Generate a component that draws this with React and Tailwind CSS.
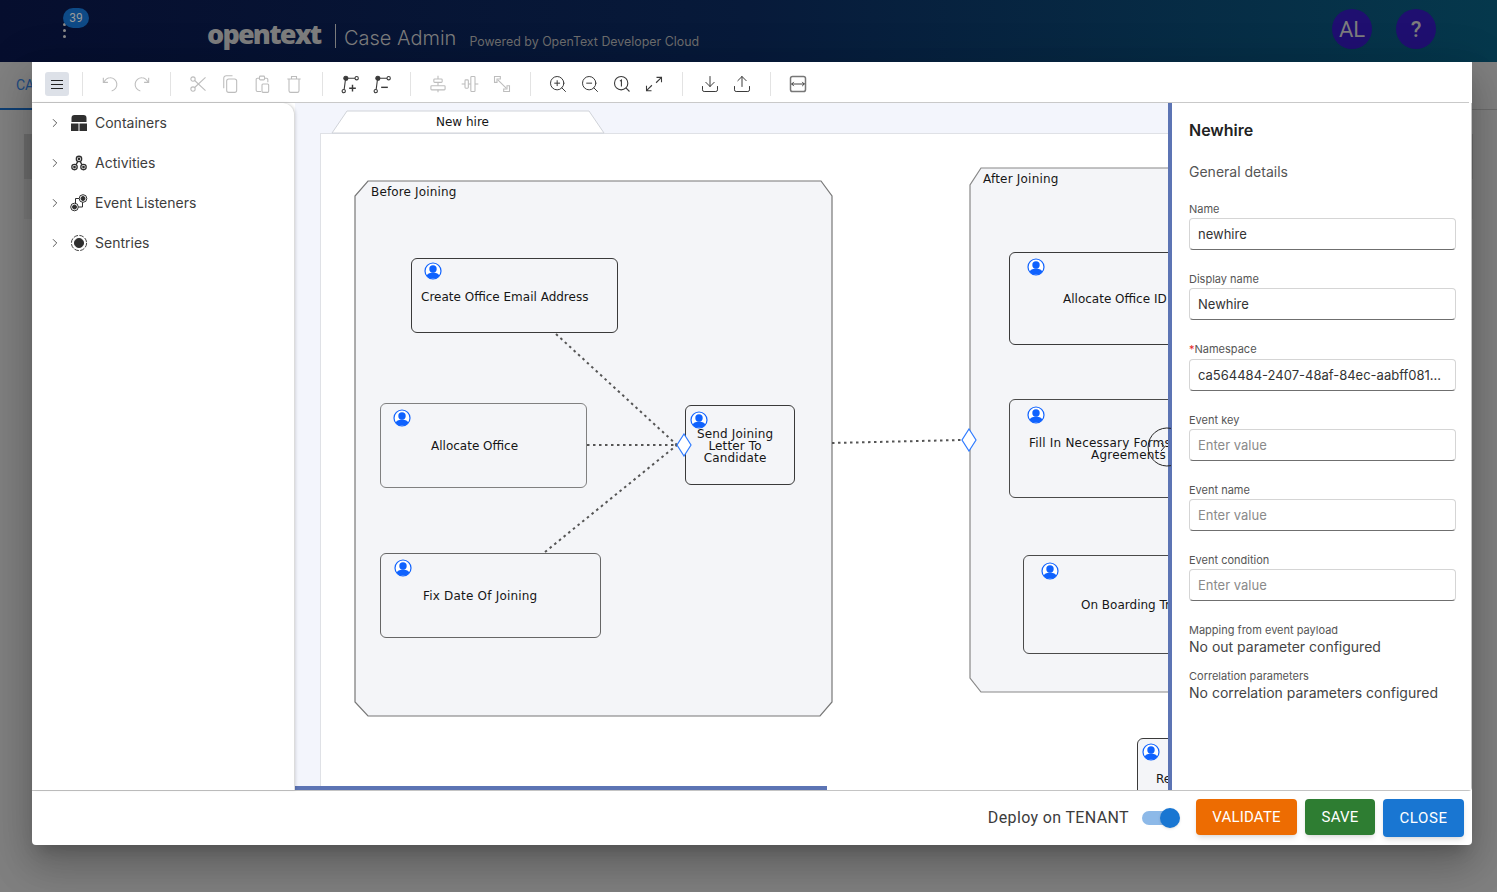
import { ChevronRight, Download, Upload, ZoomIn, ZoomOut } from 'lucide-react';

const inter = 'font-["Inter",sans-serif]';

function Sep({ className = 'ml-4 mr-[15px]' }) {
    return <div className={`w-px h-6 bg-[#e3e3e3] shrink-0 ${className}`} />;
}

function ToolIcon({ children, off }) {
    return (
        <svg viewBox="0 0 24 24" fill="none" stroke="currentColor" strokeWidth="1.3" className={`w-5 h-5 ${off ? 'text-[#bdbdbd]' : 'text-[#3a3a3a]'}`}>
            {children}
        </svg>
    );
}

function ToolButton({ children }) {
    return <div className="w-6 h-6 flex items-center justify-center shrink-0">{children}</div>;
}

const lucideOn = { size: 20, strokeWidth: 1.2, className: 'text-[#3a3a3a]' };

function Toolbar() {
    return (
        <div className="h-[41px] flex items-center pl-[13px] pt-1 border-b border-[#c9c9c9] mr-[3px] shrink-0">
            <div className="w-6 h-6 rounded-[3px] bg-[#dde1e8] flex flex-col items-center justify-center gap-[3px] shrink-0">
                <div className="w-3 h-px bg-[#222]" />
                <div className="w-3 h-px bg-[#222]" />
                <div className="w-3 h-px bg-[#222]" />
            </div>
            <Sep className="ml-[13px] mr-[15px]" />
            <div className="flex gap-2">
                <ToolButton>
                    <ToolIcon off>
                        <path d="M4 4.5V10h5.5" />
                        <path d="M4.5 10C6.5 6.5 9.5 4.500 12 4.500a8 8 0 0 1 2 15.800" />
                    </ToolIcon>
                </ToolButton>
                <ToolButton>
                    <ToolIcon off>
                        <path d="M20 4.500V10h-5.500" />
                        <path d="M19.500 10C17.500 6.500 14.500 4.500 12 4.500a8 8 0 0 0-2 15.800" />
                    </ToolIcon>
                </ToolButton>
            </div>
            <Sep />
            <div className="flex gap-2">
                <ToolButton>
                    <ToolIcon off>
                        <circle cx="6" cy="6" r="2.6" />
                        <circle cx="6" cy="18" r="2.6" />
                        <path d="M8 7.800 21 20M8 16.200 21 4" />
                    </ToolIcon>
                </ToolButton>
                <ToolButton>
                    <ToolIcon off>
                        <rect x="8" y="6" width="12" height="16" rx="2.500" />
                        <path d="M4.500 17V5a3 3 0 0 1 3-3H15" />
                    </ToolIcon>
                </ToolButton>
                <ToolButton>
                    <ToolIcon off>
                        <path d="M9 5H6.500A1.500 1.500 0 0 0 5 6.500v13A1.500 1.500 0 0 0 6.500 21H11M15 5h2.500A1.500 1.500 0 0 1 19 6.500V10" />
                        <rect x="9" y="2.500" width="6" height="4.500" rx="1" />
                        <rect x="12" y="12" width="8" height="10" rx="1.200" />
                    </ToolIcon>
                </ToolButton>
                <ToolButton>
                    <ToolIcon off>
                        <path d="M4 6h16M9 6V3h6v3" />
                        <path d="M6 6v14a2 2 0 0 0 2 2h8a2 2 0 0 0 2-2V6" />
                    </ToolIcon>
                </ToolButton>
            </div>
            <Sep />
            <div className="flex gap-2">
                <ToolButton>
                    <ToolIcon>
                        <circle cx="4.500" cy="20.500" r="2" />
                        <circle cx="20" cy="5" r="2" />
                        <circle cx="7" cy="5" r="2.400" fill="currentColor" />
                        <path d="M18 5H7M6.500 7 5 18.500" />
                        <path d="M15 13v8M11 17h8" strokeWidth="1.700" />
                    </ToolIcon>
                </ToolButton>
                <ToolButton>
                    <ToolIcon>
                        <circle cx="4.500" cy="20.500" r="2" />
                        <circle cx="20" cy="5" r="2" />
                        <circle cx="7" cy="5" r="2.400" fill="currentColor" />
                        <path d="M18 5H7M6.500 7 5 18.500" />
                        <path d="M11 16h8" strokeWidth="1.700" />
                    </ToolIcon>
                </ToolButton>
            </div>
            <Sep />
            <div className="flex gap-2">
                <ToolButton>
                    <ToolIcon off>
                        <path d="M12 2v20" />
                        <rect x="7" y="6" width="10" height="4" rx="1" fill="white" />
                        <rect x="3.500" y="14" width="17" height="5" rx="1" fill="white" />
                    </ToolIcon>
                </ToolButton>
                <ToolButton>
                    <ToolIcon off>
                        <path d="M2 12h20" />
                        <rect x="6" y="7" width="4" height="10" rx="1" fill="white" />
                        <rect x="13" y="3" width="5" height="18" rx="1" fill="white" />
                    </ToolIcon>
                </ToolButton>
                <ToolButton>
                    <ToolIcon off>
                        <path d="M3 10V3h7v3H6v4zM21 14v7h-7v-3h4v-4z" />
                        <path d="M7 7l10 10" />
                    </ToolIcon>
                </ToolButton>
            </div>
            <Sep />
            <div className="flex gap-2">
                <ToolButton><ZoomIn {...lucideOn} /></ToolButton>
                <ToolButton><ZoomOut {...lucideOn} /></ToolButton>
                <ToolButton>
                    <ToolIcon>
                        <circle cx="11" cy="11" r="8" />
                        <path d="m21 21-4.300-4.300M9.500 8.500l1.800-1.200V15" />
                    </ToolIcon>
                </ToolButton>
                <ToolButton>
                    <ToolIcon>
                        <path d="M15 4h6v6M21 4l-6.500 6.500M9 20H3v-6M3 20l6.500-6.500" />
                    </ToolIcon>
                </ToolButton>
            </div>
            <Sep />
            <div className="flex gap-2">
                <ToolButton><Download {...lucideOn} /></ToolButton>
                <ToolButton><Upload {...lucideOn} /></ToolButton>
            </div>
            <Sep />
            <ToolButton>
                <svg viewBox="0 0 24 24" fill="none" className="w-5 h-5">
                    <rect x="3" y="3" width="18" height="18" rx="2.500" stroke="#777" strokeWidth="1.800" />
                    <path d="M4 12h16M7 9.500 4.500 12 7 14.500M17 9.500l2.500 2.500-2.500 2.500" stroke="#333" strokeWidth="1.100" />
                </svg>
            </ToolButton>
        </div>
    );
}

function ContainersIcon() {
    return (
        <svg viewBox="0 0 18 18" className="w-[18px] h-[18px]" fill="#2f2f2f">
            <path d="M1.500 4a3 3 0 0 1 3-3h9a3 3 0 0 1 3 3v4h-15z" />
            <rect x="1" y="9.500" width="7.500" height="7.500" />
            <rect x="9.500" y="9.500" width="7.500" height="7.500" />
        </svg>
    );
}

function ActivitiesIcon() {
    return (
        <svg viewBox="-1 -1 20 20" className="w-[18px] h-[18px]" fill="none" stroke="#2f2f2f" strokeWidth="1.400">
            <circle cx="9" cy="4.500" r="3" />
            <circle cx="4" cy="13.500" r="3" />
            <circle cx="14" cy="13.500" r="3" />
            <circle cx="9" cy="4.500" r="0.800" fill="#2f2f2f" />
            <circle cx="4" cy="13.500" r="0.800" fill="#2f2f2f" />
            <circle cx="14" cy="13.500" r="0.800" fill="#2f2f2f" />
            <path d="M7.700 7.200 5.800 10.800M10.300 7.200l1.900 3.600" />
        </svg>
    );
}

function ListenersIcon() {
    return (
        <svg viewBox="0 0 18 18" className="w-[18px] h-[18px]" fill="none" stroke="#2f2f2f" strokeWidth="1">
            <circle cx="13" cy="4.500" r="3.800" />
            <circle cx="13" cy="4.500" r="2" fill="#2f2f2f" />
            <circle cx="4.500" cy="13" r="3.800" />
            <circle cx="4.500" cy="13" r="2" fill="#2f2f2f" />
            <path d="M9.200 4.500H5.500v4.700M8.300 13H12.500V8.300" />
        </svg>
    );
}

function SentriesIcon() {
    return (
        <svg viewBox="0 0 18 18" className="w-[18px] h-[18px]" fill="none" stroke="#2f2f2f" strokeWidth="0.900">
            <circle cx="9" cy="9" r="7.600" strokeDasharray="4.600 1.400" />
            <circle cx="9" cy="9" r="4.600" fill="#2f2f2f" />
        </svg>
    );
}

const paletteRows = [
    { label: 'Containers', Icon: ContainersIcon },
    { label: 'Activities', Icon: ActivitiesIcon },
    { label: 'Event Listeners', Icon: ListenersIcon },
    { label: 'Sentries', Icon: SentriesIcon },
];

function Palette() {
    return (
        <div className={`w-[262px] shrink-0 bg-white rounded-tr-xl border-r border-[#dcdcdc] shadow-[1px_0_3px_rgba(0,0,0,0.12)] z-10 ${inter}`}>
            {paletteRows.map(({ label, Icon }) => (
                <div key={label} className="h-10 flex items-center pl-[15px] text-sm text-[#3d3d3d]">
                    <ChevronRight size={14} strokeWidth={1.5} className="text-[#444] mr-2" />
                    <div className="w-[18px] h-[18px] mr-[7px] shrink-0"><Icon /></div>
                    {label}
                </div>
            ))}
        </div>
    );
}

function UserMark({ className }) {
    return (
        <svg viewBox="0 0 18 18" className={`absolute w-[18px] h-[18px] ${className}`}>
            <circle cx="9" cy="9" r="8" fill="white" stroke="#0f62fe" strokeWidth="1.200" />
            <circle cx="9" cy="7" r="3.700" fill="#0f62fe" />
            <path d="M2.700 13.400c1.200-2 3.800-2.800 6.300-2.800s5.100.8 6.300 2.800A7.500 7.500 0 0 1 9 16.600a7.500 7.500 0 0 1-6.300-3.200z" fill="#0f62fe" />
        </svg>
    );
}

function Task({ className, border = 'border-[#3a3a3a]', mark, children }) {
    return (
        <div className={`absolute bg-[#f4f5f8] border-[1.5px] ${border} rounded-[6px] ${className}`}>
            <UserMark className={mark} />
            {children}
        </div>
    );
}

const labelText = 'absolute whitespace-nowrap text-[12px] leading-[12px] text-[#161616] font-["DejaVu_Sans",sans-serif]';

function Canvas() {
    return (
        <div className="relative flex-1 min-w-0 overflow-hidden bg-[#f3f5fc]">
            {/* paper and tab */}
            <div className="absolute left-[25px] top-[30px] w-[900px] h-[700px] bg-white border border-[#dfe1e6]" />
            <svg viewBox="295 103 873 687" className="absolute inset-0 w-[873px] h-[687px]">
                <path d="M332 133 L347 111 H589 L604 133 Z" fill="white" stroke="#d0d3d9" />
                <polygon points="368,181 821,181 832,196 832,702 820,716 368,716 355,702 355,196" fill="#f4f5f8" stroke="#777" strokeWidth="1.200" />
                <polygon points="981,168 1300,168 1300,692 981,692 970,678 970,185" fill="#f4f5f8" stroke="#888" strokeWidth="1.200" />
                <g stroke="#555" strokeWidth="2" strokeDasharray="2.500 3.500" fill="none">
                    <path d="M556 334 677 445" />
                    <path d="M587 445H677" />
                    <path d="M545 552 677 445" />
                    <path d="M832 443 962 440" />
                </g>
            </svg>

            <div className={`${labelText} left-[141px] top-[13px]`}>New hire</div>
            <div className={`${labelText} left-[76px] top-[83px] tracking-[0.15px]`}>Before Joining</div>
            <div className={`${labelText} left-[688px] top-[70px] tracking-[0.2px]`}>After Joining</div>

            <Task className="left-[116px] top-[155px] w-[207px] h-[75px]" mark="left-[12px] top-[3px]">
                <div className={`${labelText} left-[9px] top-[32px]`}>Create Office Email Address</div>
            </Task>
            <Task className="left-[85px] top-[300px] w-[207px] h-[85px]" border="border-[#808080]" mark="left-[12px] top-[5px]">
                <div className={`${labelText} left-[50px] top-[36px]`}>Allocate Office</div>
            </Task>
            <Task className="left-[85px] top-[450px] w-[221px] h-[85px]" border="border-[#666]" mark="left-[13px] top-[5px]">
                <div className={`${labelText} left-[42px] top-[36px] tracking-[0.2px]`}>Fix Date Of Joining</div>
            </Task>
            <Task className="left-[390px] top-[302px] w-[110px] h-[80px]" mark="left-[4px] top-[5px]">
                <div className={`${labelText} left-[11px] top-[22px] text-center tracking-[0.15px]`}>
                    Send Joining<br />Letter To<br />Candidate
                </div>
            </Task>
            <svg viewBox="0 0 16 24" className="absolute left-[381px] top-[330px] w-4 h-6">
                <path d="M8 1 15 12 8 23 1 12Z" fill="white" stroke="#2f7bff" strokeWidth="1.200" />
            </svg>

            <Task className="left-[714px] top-[149px] w-[400px] h-[93px]" mark="left-[17px] top-[5px]">
                <div className={`${labelText} left-[53px] top-[40px]`}>Allocate Office ID</div>
            </Task>
            <Task className="left-[714px] top-[296px] w-[400px] h-[99px]" border="border-[#4a4a4a]" mark="left-[17px] top-[6px]">
                <div className={`${labelText} left-[19px] top-[37px] w-[199px] text-center tracking-[0.2px]`}>
                    Fill In Necessary Forms And Sign<br />Agreements
                </div>
            </Task>
            <Task className="left-[728px] top-[452px] w-[400px] h-[99px]" border="border-[#4a4a4a]" mark="left-[17px] top-[6px]">
                <div className={`${labelText} left-[57px] top-[43px]`}>On Boarding Training</div>
            </Task>
            <Task className="left-[842px] top-[635px] w-[200px] h-[100px]" mark="left-[4px] top-[4px]">
                <div className={`${labelText} left-[18px] top-[34px]`}>Review</div>
            </Task>
            <svg viewBox="0 0 16 24" className="absolute left-[666px] top-[325px] w-4 h-6">
                <path d="M8 1 15 12 8 23 1 12Z" fill="white" stroke="#2f7bff" strokeWidth="1.200" />
            </svg>

            {/* scrollbar */}
            <div className="absolute left-0 bottom-0 w-[532px] h-1 bg-[#5c74b4]" />
        </div>
    );
}

function Field({ label, value, required }) {
    return (
        <div>
            <div className={`text-[11px] leading-[14px] text-[#555] ${required ? 'mb-[3px]' : 'mb-[2px]'}`}>
                {required && <span className="text-[#e5252a]">*</span>}
                {label}
            </div>
            <div className="h-8 rounded-[4px] border border-[#d5d5d5] border-b-[#6f6f6f] flex items-center pt-px px-2 text-[13px] truncate">
                {value
                    ? <span className="text-[#333]">{value}</span>
                    : <span className="text-[#8a8a8a]">Enter value</span>}
            </div>
        </div>
    );
}

function Properties() {
    return (
        <div className={`w-[303px] shrink-0 bg-white border-l-4 border-[#5c74b4] pl-[17px] pr-[15px] ${inter}`}>
            <div className="text-base leading-5 font-semibold text-[#222] mt-[17px]">Newhire</div>
            <div className="text-sm leading-5 text-[#555] mt-[22px]">General details</div>
            <div className="flex flex-col gap-[22px] mt-[20px]">
                <Field label="Name" value="newhire" />
                <Field label="Display name" value="Newhire" />
                <Field label="Namespace" value="ca564484-2407-48af-84ec-aabff081..." required />
                <Field label="Event key" />
                <Field label="Event name" />
                <Field label="Event condition" />
            </div>
            <div className="text-[11px] leading-[15px] text-[#555] mt-[22px]">Mapping from event payload</div>
            <div className="text-sm leading-[18px] text-[#444]">No out parameter configured</div>
            <div className="text-[11px] leading-[15px] text-[#555] mt-[13px]">Correlation parameters</div>
            <div className="text-sm leading-[18px] text-[#444]">No correlation parameters configured</div>
        </div>
    );
}

function Footer() {
    return (
        <div className='flex-1 flex items-start justify-end pt-2 pr-2 font-["Roboto",sans-serif]'>
            <div className="text-base tracking-[0.36px] leading-[38px] text-[#3c3c3c] mr-[13px]">Deploy on TENANT</div>
            <div className="relative w-[38px] h-9 mr-4 shrink-0">
                <div className="absolute left-0 top-3 w-[36px] h-[14px] rounded-full bg-[#8db9e8]" />
                <div className="absolute right-0 top-[9px] w-5 h-5 rounded-full bg-[#1976d2] shadow-sm" />
            </div>
            <div className="h-9 w-[101px] rounded bg-[#ed6c02] text-white text-[15px] tracking-[0.2px] flex items-center justify-center shadow-md mr-2">VALIDATE</div>
            <div className="h-9 w-[70px] rounded bg-[#2e7d32] text-white text-[15px] tracking-[0.2px] flex items-center justify-center shadow-md mr-2">SAVE</div>
            <div className="h-[38px] w-[81px] rounded bg-[#1976d2] text-white text-[15px] tracking-[0.6px] flex items-center justify-center shadow-md">CLOSE</div>
        </div>
    );
}

function Header() {
    return (
        <div className='relative h-[62px] flex items-center bg-gradient-to-r from-[#060e2e] via-[#071a3a] to-[#05384c] font-["Roboto",sans-serif]'>
            <div className="flex flex-col gap-[3px] ml-[63px] mb-[2px]">
                <div className="w-[3px] h-[3px] rounded-full bg-[#8a8a8a]" />
                <div className="w-[3px] h-[3px] rounded-full bg-[#8a8a8a]" />
                <div className="w-[3px] h-[3px] rounded-full bg-[#8a8a8a]" />
            </div>
            <div className="absolute left-[63px] top-2 w-[26px] h-5 rounded-full bg-[#0e4a86] text-[#9a9a9a] text-xs flex items-center justify-center">39</div>
            <div className='ml-[141px] w-[114px] text-[27px] font-extrabold tracking-[-1.800px] leading-none text-[#7d7d7d] font-["Open_Sans",sans-serif] mt-1 whitespace-nowrap'>
                opentext
            </div>
            <div className="w-px h-6 bg-[#7d7d7d] ml-[14px] mt-[10px]" />
            <div className='text-[20px] font-light text-[#7d7d7d] ml-2 mt-[14px] font-["Inter",sans-serif]'>Case Admin</div>
            <div className='text-[12.400px] text-[#6d6d6d] ml-[13px] mt-[22px] font-["Inter",sans-serif]'>Powered by OpenText Developer Cloud</div>
            <div className="ml-auto flex gap-6 mr-[61px] mb-1 text-[#7d7d7d] text-[22px]">
                <div className="w-10 h-10 rounded-full bg-[#1f0f70] flex items-center justify-center">AL</div>
                <div className="w-10 h-10 rounded-full bg-[#1f0f70] flex items-center justify-center font-medium">?</div>
            </div>
        </div>
    );
}

export default function App() {
    return (
        <div className='relative h-[892px] overflow-hidden bg-[#808080] font-["Roboto",sans-serif]'>
            <Header />
            {/* page behind the dialog */}
            <div className="h-[48px] border-b border-[#6c6c6c] flex text-sm text-[#1c4a80]">
                <div className="w-[100px] h-[48px] border-b-2 border-[#0f3f73] pl-4 leading-[46px]">CASES</div>
            </div>
            <div className="mx-6 mt-6">
                <div className="h-[45px] bg-[#6e6e6e]" />
                <div className="h-[40px] bg-[#7a7a7a]" />
            </div>

            {/* dialog */}
            <div className="absolute left-8 top-[62px] w-[1440px] h-[783px] bg-white rounded-b flex flex-col shadow-[0_11px_15px_-7px_rgba(0,0,0,0.2),0_24px_38px_3px_rgba(0,0,0,0.14),0_9px_46px_8px_rgba(0,0,0,0.12)]">
                <Toolbar />
                <div className="relative h-[688px] flex pl-px border-b border-r border-[#c4c4c4] rounded-br shrink-0">
                    <Palette />
                    <Canvas />
                    <Properties />
                    {/* expand handle lying over the panel edge */}
                    <svg viewBox="0 0 24 40" className="absolute left-[1115px] top-[324px] w-6 h-10" fill="none" stroke="#222" strokeWidth="1">
                        <path d="M24 1.400A19 19 0 1 0 24 38.600" />
                        <path d="M14 16l3.500 4-3.500 4" />
                    </svg>
                </div>
                <Footer />
            </div>
        </div>
    );
}
